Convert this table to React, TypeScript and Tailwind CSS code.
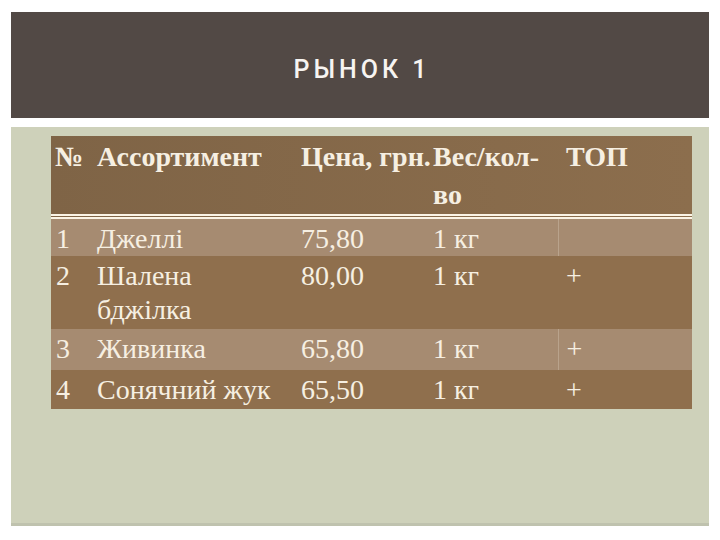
const ROWS = [
  { n: "1", name: "Джеллі", price: "75,80", weight: "1 кг", top: "", light: true, h: "h-[37px]" },
  { n: "2", name: "Шалена бджілка", price: "80,00", weight: "1 кг", top: "+", light: false, h: "h-[73px]" },
  { n: "3", name: "Живинка", price: "65,80", weight: "1 кг", top: "+", light: true, h: "h-[41px]" },
  { n: "4", name: "Сонячний жук", price: "65,50", weight: "1 кг", top: "+", light: false, h: "h-[39px]" },
];

const serif = "font-['Liberation_Serif','Times_New_Roman',serif]";

export default function App() {
  return (
    <div className="flex h-[540px] w-[720px] flex-col bg-white px-[11px] pt-[12px]">
      <div className="flex h-[106px] items-center justify-center bg-[#524945] pt-[10px]">
        <h1 className="pl-[4px] font-['Roboto',sans-serif] text-[25px] font-medium tracking-[4px] text-[#f7f4f1]">
          РЫНОК 1
        </h1>
      </div>

      <div className="mt-[9px] h-[399px] border-b-[3px] border-[#bfc2ae] bg-[#ced1ba] pl-[40px] pr-[17px] pt-[9px]">
        <table className={`w-[641px] table-fixed border-collapse text-[#f6efe2] ${serif}`}>
          <colgroup>
            <col className="w-[41px]" />
            <col className="w-[205px]" />
            <col className="w-[131px]" />
            <col className="w-[130px]" />
            <col className="w-[134px]" />
          </colgroup>
          <thead>
            <tr className="bg-gradient-to-r from-[#7f6446] to-[#8c6e4d] text-[28px] leading-[38px]">
              <th className="h-[71px] border-b-[5px] border-double border-[#fbf4e6] pl-[4px] pt-[2px] text-left align-top font-bold">
                №
              </th>
              <th className="border-b-[5px] border-double border-[#fbf4e6] pl-[5px] pt-[2px] text-left align-top font-bold">
                Ассортимент
              </th>
              <th className="overflow-visible whitespace-nowrap border-b-[5px] border-double border-[#fbf4e6] pl-[4px] pt-[2px] text-left align-top font-bold">
                Цена, грн.
              </th>
              <th className="border-b-[5px] border-double border-[#fbf4e6] pl-[5px] pt-[2px] text-left align-top font-bold">
                Вес/кол-
                <br />
                во
              </th>
              <th className="border-b-[5px] border-double border-[#fbf4e6] pl-[8px] pt-[2px] text-left align-top font-bold">
                ТОП
              </th>
            </tr>
          </thead>
          <tbody className="text-[28px] leading-[34px]">
            {ROWS.map((r) => (
              <tr key={r.n} className={`${r.h} ${r.light ? "bg-[#a68b71]" : "bg-[#8f6f4d]"}`}>
                <td className="pl-[5px] pt-[3px] align-top">{r.n}</td>
                <td className="pl-[5px] pt-[3px] align-top">
                  <div className="max-w-[185px]">{r.name}</div>
                </td>
                <td className="pl-[4px] pt-[3px] align-top">{r.price}</td>
                <td
                  className={`pl-[5px] pt-[3px] align-top ${
                    r.light ? "border-r border-[#b9a38c]" : ""
                  }`}
                >
                  {r.weight}
                </td>
                <td className="pl-[8px] pt-[3px] align-top">{r.top}</td>
              </tr>
            ))}
          </tbody>
        </table>
      </div>
    </div>
  );
}
